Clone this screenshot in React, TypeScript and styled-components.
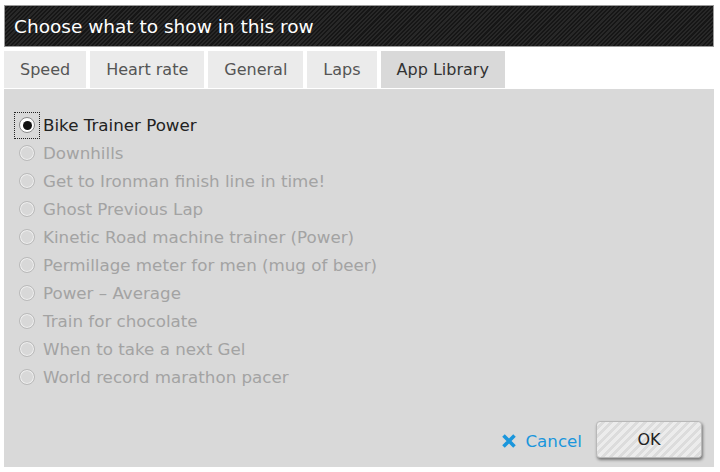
import React, { useState } from 'react'
import styled, { createGlobalStyle } from 'styled-components'

const GlobalStyle = createGlobalStyle`
  html, body {
    margin: 0;
    padding: 0;
    background: #fff;
  }
  body {
    font-family: "DejaVu Sans", Verdana, sans-serif;
  }
`

const TABS = ['Speed', 'Heart rate', 'General', 'Laps', 'App Library']

const APPS = [
  'Bike Trainer Power',
  'Downhills',
  'Get to Ironman finish line in time!',
  'Ghost Previous Lap',
  'Kinetic Road machine trainer (Power)',
  'Permillage meter for men (mug of beer)',
  'Power – Average',
  'Train for chocolate',
  'When to take a next Gel',
  'World record marathon pacer'
]

export default function App () {
  const [tab, setTab] = useState(4)
  const [selected, setSelected] = useState(0)

  return (
    <>
      <GlobalStyle />
      <Dialog>
        <TitleBar>Choose what to show in this row</TitleBar>
        <TabRow>
          {TABS.map((name, i) => (
            <Tab key={name} $active={i === tab} onClick={() => setTab(i)}>{name}</Tab>
          ))}
        </TabRow>
        <Panel>
          <OptionList>
            {APPS.map((name, i) => (
              <Option key={name} $disabled={i !== 0} onClick={() => i === 0 && setSelected(i)}>
                <RadioWrap $focused={i === selected}>
                  <Radio $checked={i === selected} />
                </RadioWrap>
                {name}
              </Option>
            ))}
          </OptionList>
          <Footer>
            <CancelLink>
              <CrossIcon width='16' height='16' viewBox='0 0 16 16'>
                <path d='M2.5 2.5 L13.5 13.5 M13.5 2.5 L2.5 13.5' stroke='#1a96dc' strokeWidth='3.6' />
              </CrossIcon>
              Cancel
            </CancelLink>
            <OkButton>OK</OkButton>
          </Footer>
        </Panel>
      </Dialog>
    </>
  )
}

const Dialog = styled.div`
  width: 710px;
  height: 462px;
  padding: 5px 0 0 4px;
  display: flex;
  flex-direction: column;
`

const TitleBar = styled.div`
  height: 40px;
  border: 1px solid #9a9a9a;
  display: flex;
  align-items: center;
  padding-left: 9px;
  color: #fff;
  font-size: 18.5px;
  background-color: #202020;
  background-image: repeating-linear-gradient(
    135deg,
    #282828 0px,
    #282828 1.5px,
    #161616 1.5px,
    #161616 3px
  );
`

const TabRow = styled.div`
  display: flex;
  gap: 4px;
  margin-top: 4px;
`

const Tab = styled.div<{ $active?: boolean }>`
  padding: 0 16px;
  display: flex;
  align-items: center;
  font-size: 16px;
  color: ${p => p.$active ? '#333' : '#555'};
  background: ${p => p.$active ? '#d9d9d9' : '#ebebeb'};
  height: 37px;
  cursor: pointer;
`

const Panel = styled.div`
  margin-top: 1px;
  flex: 1;
  background: #d9d9d9;
  display: flex;
  flex-direction: column;
  justify-content: space-between;
`

const OptionList = styled.div`
  padding: 22px 0 0 10px;
  display: flex;
  flex-direction: column;
`

const Option = styled.label<{ $disabled?: boolean }>`
  height: 28px;
  display: flex;
  align-items: center;
  font-size: 16.7px;
  color: ${p => p.$disabled ? '#a3a3a3' : '#222'};
`

const RadioWrap = styled.span<{ $focused?: boolean }>`
  width: 24px;
  height: 25px;
  display: flex;
  align-items: center;
  justify-content: center;
  margin-right: 3px;
  border: 1px dotted ${p => p.$focused ? '#222' : 'transparent'};
`

const Radio = styled.span<{ $checked?: boolean }>`
  width: 16px;
  height: 16px;
  border-radius: 50%;
  box-sizing: border-box;
  border: 1px solid ${p => p.$checked ? '#888' : '#bababa'};
  background: ${p => p.$checked ? '#fff' : '#d8d8d8'};
  box-shadow: ${p => p.$checked ? 'none' : 'inset 0 0 0 1px #efefef'};
  display: flex;
  align-items: center;
  justify-content: center;
  &::after {
    content: '';
    display: ${p => p.$checked ? 'block' : 'none'};
    width: 9px;
    height: 9px;
    border-radius: 50%;
    background: #111;
  }
`

const Footer = styled.div`
  display: flex;
  justify-content: flex-end;
  align-items: center;
  gap: 14px;
  padding: 0 12px 9px 0;
`

const CancelLink = styled.a`
  display: flex;
  align-items: center;
  gap: 8px;
  color: #1a96dc;
  font-size: 16.7px;
  margin-top: 3px;
  cursor: pointer;
`

const CrossIcon = styled.svg`
  display: block;
`

const OkButton = styled.button`
  width: 106px;
  height: 37px;
  border: 1px solid #b8b8b8;
  border-radius: 4px;
  font-family: "DejaVu Sans", Verdana, sans-serif;
  font-size: 16px;
  color: #222;
  background-color: #e6e6e6;
  background-image: repeating-linear-gradient(
    135deg,
    #ececec 0px,
    #ececec 3px,
    #dcdcdc 3px,
    #dcdcdc 6px
  );
  box-shadow: 1px 2px 3px rgba(0, 0, 0, 0.45);
`
